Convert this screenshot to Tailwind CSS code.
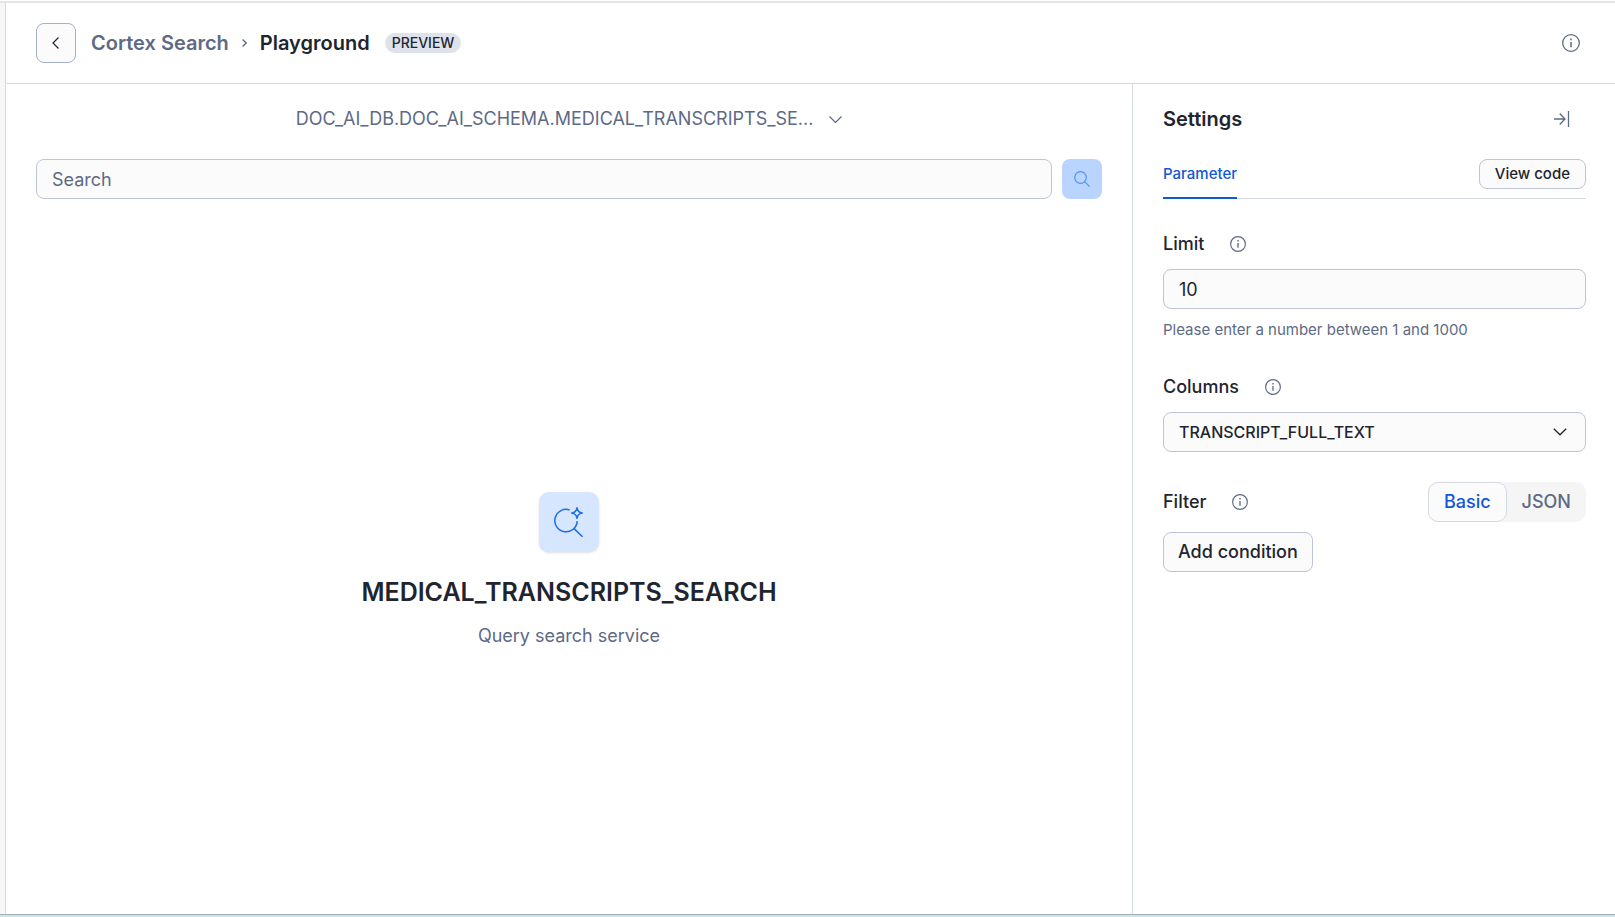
<!DOCTYPE html>
<html lang="en">
<head>
<meta charset="utf-8">
<meta name="viewport" content="width=device-width, initial-scale=1">
<title>Cortex Search Playground</title>
<script src="https://cdn.jsdelivr.net/npm/@tailwindcss/browser@4"></script>
</head>
<body class="flex min-h-screen flex-col bg-white pt-px font-[Inter,sans-serif] text-lg leading-6 text-[#1e252f]">
<svg class="hidden" aria-hidden="true">
  <symbol id="info" viewBox="0 0 18 18"><circle cx="9" cy="9" r="8.3" fill="none" stroke="currentColor" stroke-width="1.3"/><path d="M9 7.9v5.3" fill="none" stroke="currentColor" stroke-width="1.5"/><path d="M8.2 4.6h1.6v1.6H8.2z" fill="currentColor"/></symbol>
</svg>
<div class="flex grow border-t-2 border-[#e2e4e4]">
  <div class="w-[6px] shrink-0 border-r border-[#d5d9e4] bg-[#f7f7f7]"></div>
  <div class="flex min-w-0 grow flex-col">
    <header class="flex h-[81px] items-center border-b border-[#d5d9e4] px-[30px]">
      <button type="button" aria-label="Back" class="flex size-10 items-center justify-center rounded-lg border border-[#a3b0c8] bg-[#fbfbfb]">
        <svg class="h-3 w-2" viewBox="0 0 8 12" fill="none" stroke="currentColor" stroke-width="1.2"><path d="M6.500.500 1 6l5.500 5.500"/></svg>
      </button>
      <nav aria-label="Breadcrumb" class="ml-[15px] flex items-center text-xl font-semibold">
        <a href="#" class="font-semibold text-[#5d6a85]">Cortex Search</a>
        <svg class="mx-[13px] h-2 w-[5px] text-[#5d6a85]" viewBox="0 0 5 8" fill="none" stroke="currentColor" stroke-width="1.3"><path d="M.6.5 4.2 4 .6 7.5"/></svg>
        <h1>Playground</h1>
      </nav>
      <span class="ml-[15px] rounded-full bg-[#dde2eb] px-[7px] text-sm leading-5 font-medium">PREVIEW</span>
      <button type="button" aria-label="About" class="mr-[5px] ml-auto text-[#5d6a85]"><svg class="size-[18px]"><use href="#info"/></svg></button>
    </header>
    <div class="flex grow">
      <main class="flex min-w-0 grow flex-col px-[30px] pt-[23px]">
        <button type="button" class="flex items-center justify-center gap-4 self-center text-[#5d6a85]">
          <span>DOC_AI_DB.DOC_AI_SCHEMA.MEDICAL_TRANSCRIPTS_SE...</span>
          <svg class="h-[7px] w-[13px]" viewBox="0 0 13 7" fill="none" stroke="currentColor" stroke-width="1.2"><path d="m.5.5 6 6 6-6"/></svg>
        </button>
        <form class="mt-7 flex gap-[10px]">
          <input type="search" aria-label="Search" placeholder="Search" class="h-10 min-w-0 grow rounded-lg border border-[#bdc4d8] bg-[#fbfbfb] px-[15px] placeholder:text-[#5d6a85]">
          <button type="button" aria-label="Run search" class="flex size-10 items-center justify-center rounded-lg bg-[#b9d5ff] text-[#4c94f8]">
            <svg class="size-4" viewBox="0 0 16 16" fill="none" stroke="currentColor" stroke-width="1.2"><circle cx="6.5" cy="6.5" r="5.8"/><path d="m10.6 10.6 5 5"/></svg>
          </button>
        </form>
        <section class="flex grow flex-col items-center justify-center pt-[27px] text-center">
          <div class="flex size-[60px] items-center justify-center rounded-[10px] bg-[#d6e6ff] text-[#1a6ce7] shadow">
            <svg class="size-[30px]" viewBox="0 0 30 30" fill="none" stroke="currentColor" stroke-width="1.5" stroke-linejoin="round"><path d="M15.600 3A11.200 11.200 0 1 0 23.200 14.100M20.100 21.600l8.400 8.100"/><path d="M23 .8c.6 3.500 1.700 4.700 5.200 5.300-3.500.6-4.600 1.700-5.200 5.200-.6-3.500-1.700-4.600-5.200-5.200C21.300 5.500 22.400 4.300 23 .8z"/></svg>
          </div>
          <h2 class="mt-6 text-[25px] leading-8 font-semibold">MEDICAL_TRANSCRIPTS_SEARCH</h2>
          <p class="mt-4 text-[#5d6a85]">Query search service</p>
        </section>
      </main>
      <aside class="w-[483px] shrink-0 border-l border-[#d5d9e4] pt-[23px] pr-[29px] pl-[30px]">
        <div class="flex items-center justify-between">
          <h2 class="text-xl leading-6 font-semibold">Settings</h2>
          <button type="button" aria-label="Collapse settings" class="mr-4 text-[#5d6a85]"><svg class="h-4 w-[17px]" viewBox="0 0 17 16" fill="none" stroke="currentColor" stroke-width="1.3"><path d="M1 8h11M6.700 2.500 12 8l-5.300 5.500M15.500 0v16"/></svg></button>
        </div>
        <div class="mt-7 flex h-10 items-start justify-between border-b border-[#d5d9e4] text-[15px]">
          <button type="button" class="h-10 border-b-2 border-[#1257d6] pb-2 font-medium text-[#1257d6]">Parameter</button>
          <button type="button" class="h-[30px] rounded-lg border border-[#bdc4d8] bg-[#fbfbfb] px-[15px] font-medium">View code</button>
        </div>
        <div class="mt-[33px] flex items-center gap-[26px]">
          <label for="limit" class="font-medium">Limit</label>
          <svg class="size-4 text-[#5d6a85]"><use href="#info"/></svg>
        </div>
        <input id="limit" type="text" inputmode="numeric" value="10" class="mt-[13px] block h-10 w-full rounded-lg border border-[#bdc4d8] bg-[#fbfbfb] px-[15px]">
        <p class="mt-[9px] text-[15px] text-[#5d6a85]">Please enter a number between 1 and 1000</p>
        <div class="mt-[33px] flex items-center gap-[26px]">
          <label for="columns" class="font-medium">Columns</label>
          <svg class="size-4 text-[#5d6a85]"><use href="#info"/></svg>
        </div>
        <div class="relative mt-[13px]">
          <select id="columns" class="block h-10 w-full appearance-none rounded-lg border border-[#bdc4d8] bg-[#fbfbfb] px-[15px] text-base font-medium"><option>TRANSCRIPT_FULL_TEXT</option></select>
          <svg class="pointer-events-none absolute top-4 right-[19px] h-2 w-[14px]" viewBox="0 0 14 8" fill="none" stroke="currentColor" stroke-width="1.3"><path d="m.8.8 6.200 6 6.200-6"/></svg>
        </div>
        <div class="mt-[30px] flex h-10 items-center gap-[26px]">
          <span class="font-medium">Filter</span>
          <svg class="size-4 text-[#5d6a85]"><use href="#info"/></svg>
          <div class="ml-auto flex h-10 rounded-[10px] bg-[#f5f5f5]">
            <button type="button" aria-pressed="true" class="rounded-[10px] border border-[#d5d9e4] bg-[#fbfbfb] px-[15px] font-medium text-[#1257d6]">Basic</button>
            <button type="button" aria-pressed="false" class="px-[15px] font-medium text-[#5d6a85]">JSON</button>
          </div>
        </div>
        <button type="button" class="mt-[10px] h-10 rounded-lg border border-[#bdc4d8] bg-[#fbfbfb] px-[14px] font-medium">Add condition</button>
      </aside>
    </div>
  </div>
</div>
<div class="h-[3px] shrink-0 border-t border-[#9fb3b6] bg-[#c9e6e8]"></div>
</body>
</html>
